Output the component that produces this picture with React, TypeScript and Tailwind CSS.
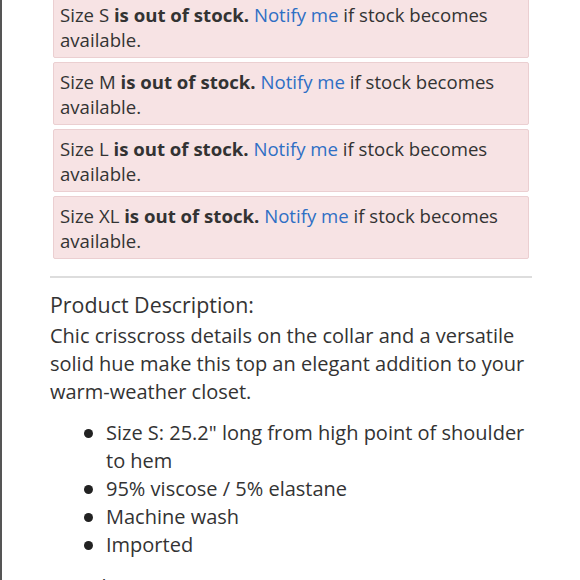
export default function App() {
  const sizes = ["S", "M", "L", "XL"];
  const items = [
    'Size S: 25.2" long from high point of shoulder to hem',
    "95% viscose / 5% elastane",
    "Machine wash",
    "Imported",
  ];
  return (
    <div className="w-[580px] h-[580px] overflow-hidden bg-white flex" style={{ fontFamily: "'Open Sans', sans-serif" }}>
      <div className="w-[2px] bg-[#555] shrink-0" />
      <div className="flex-1 pl-[48px] pr-[48px] text-[#333]">
        <div className="-mt-[5px] flex flex-col gap-[4px] px-[3px]">
          {sizes.map((s) => (
            <div key={s} className="bg-[#f7e3e4] border border-[#ebcfd1] rounded-[2px] px-[6px] pt-[6px] pb-[5px] text-[18.6px] leading-[25px]">
              Size {s} <b className="font-bold">is out of stock.</b>{" "}
              <span className="text-[#2f6fc4]">Notify me</span> if stock becomes available.
            </div>
          ))}
        </div>
        <div className="mt-[17px] h-[2px] bg-[#dddddd]" />
        <h2 className="mt-[13px] text-[21.4px] leading-[28px]">Product Description:</h2>
        <p className="mt-[3px] text-[20px] leading-[28px]">
          Chic crisscross details on the collar and a versatile solid hue make this top an elegant addition to your warm-weather closet.
        </p>
        <ul className="mt-[13px] flex flex-col text-[20px] leading-[28px]">
          {items.map((t) => (
            <li key={t} className="flex">
              <span className="w-[56px] shrink-0 flex justify-end pr-[13px] pt-[10px]">
                <span className="w-[9px] h-[9px] rounded-full bg-[#222]" />
              </span>
              <span>{t}</span>
            </li>
          ))}
        </ul>
        <p className="mt-[14px] text-[20px] leading-[28px]">Size chart</p>
      </div>
    </div>
  );
}
